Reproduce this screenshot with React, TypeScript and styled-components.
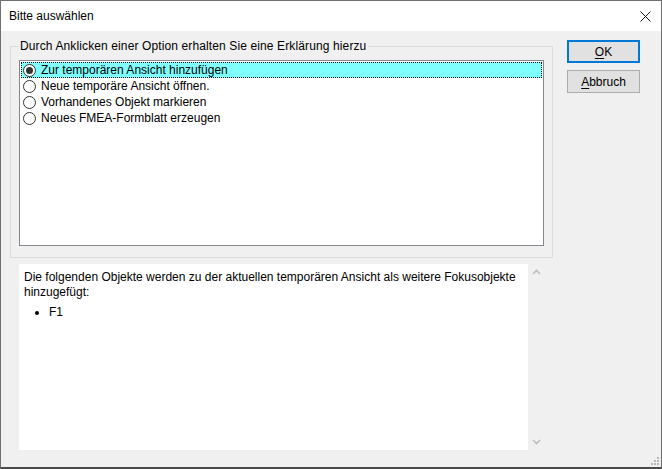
import styled, { createGlobalStyle } from 'styled-components'

const GlobalStyle = createGlobalStyle`
  html, body {
    margin: 0;
    padding: 0;
    background: #3a3a3a;
  }
  * {
    box-sizing: border-box;
  }
`

const Window = styled.div`
  position: relative;
  width: 662px;
  height: 469px;
  border: 1px solid #707070;
  border-bottom: 2px solid #4a4a4a;
  display: flex;
  flex-direction: column;
  font-family: "Liberation Sans", Arial, sans-serif;
  font-size: 12px;
  color: #000;
  background: #f0f0f0;
`

const TitleBar = styled.div`
  height: 30px;
  background: #fff;
  display: flex;
  align-items: center;
  justify-content: space-between;
  padding-left: 8px;
  flex-shrink: 0;
`

const Title = styled.span`
  font-size: 12px;
`

const CloseButton = styled.div`
  width: 46px;
  height: 30px;
  display: flex;
  align-items: center;
  justify-content: center;
  padding-left: 14px;
`

const Body = styled.div`
  flex: 1;
  display: flex;
  padding: 8px 0 0 9px;
`

const LeftColumn = styled.div`
  width: 543px;
  display: flex;
  flex-direction: column;
`

const GroupBox = styled.fieldset`
  margin: 0;
  padding: 0;
  min-width: 0;
  border: 1px solid #dcdcdc;
`

const GroupLabel = styled.legend`
  margin-left: 7px;
  padding: 0 2px;
  line-height: 15px;
  letter-spacing: 0.12px;
`

const ListBox = styled.div`
  margin: 6px 8px 11px 8px;
  height: 186px;
  border: 1px solid #828790;
  background: #fff;
  padding: 1px;
`

const ListItem = styled.div<{ $selected?: boolean }>`
  height: 16px;
  display: flex;
  align-items: center;
  gap: 5px;
  padding-left: 2px;
  white-space: nowrap;
  background: ${p => (p.$selected ? '#80ffff' : 'transparent')};
  outline: ${p => (p.$selected ? '1px dotted #000' : 'none')};
  outline-offset: -1px;
`

const Radio = styled.span<{ $checked?: boolean }>`
  width: 13px;
  height: 13px;
  border-radius: 50%;
  border: 1px solid #333;
  background: #fff;
  display: flex;
  align-items: center;
  justify-content: center;
  flex-shrink: 0;
  &::after {
    content: '';
    width: 7px;
    height: 7px;
    border-radius: 50%;
    background: ${p => (p.$checked ? '#333' : 'transparent')};
  }
`

const InfoRow = styled.div`
  display: flex;
  margin: 6px 0 0 9px;
  height: 186px;
`

const InfoText = styled.div`
  width: 509px;
  background: #fff;
  padding: 6px 5px 0 5px;
  line-height: 15px;
`

const BulletList = styled.ul`
  margin: 5px 0 0 0;
  padding-left: 25px;
  list-style: disc;
`

const ScrollBar = styled.div`
  width: 17px;
  display: flex;
  flex-direction: column;
  justify-content: space-between;
  align-items: center;
  padding: 5px 0 5px 0;
`

const RightColumn = styled.div`
  margin-left: 14px;
  padding-top: 1px;
  display: flex;
  flex-direction: column;
  gap: 7px;
`

const Button = styled.div<{ $default?: boolean }>`
  width: 73px;
  height: 23px;
  display: flex;
  align-items: center;
  justify-content: center;
  background: #e1e1e1;
  border: ${p => (p.$default ? '2px solid #0078d7' : '1px solid #adadad')};
  & u {
    text-decoration-thickness: 1px;
    text-underline-offset: 2px;
  }
`

const Grip = styled.svg`
  position: absolute;
  right: 2px;
  bottom: 2px;
`

const Chevron = ({ up }: { up?: boolean }) => (
  <svg width="9" height="6" viewBox="0 0 9 6">
    <path
      d={up ? 'M1 5 L4.5 1.5 L8 5' : 'M1 1 L4.5 4.5 L8 1'}
      fill="none"
      stroke="#bdbdbd"
      strokeWidth="1.6"
    />
  </svg>
)

const options = [
  'Zur temporären Ansicht hinzufügen',
  'Neue temporäre Ansicht öffnen.',
  'Vorhandenes Objekt markieren',
  'Neues FMEA-Formblatt erzeugen',
]

export default function App() {
  return (
    <>
      <GlobalStyle />
      <Window>
        <TitleBar>
          <Title>Bitte auswählen</Title>
          <CloseButton>
            <svg width="11" height="11" viewBox="0 0 11 11">
              <path d="M0.5 0.5 L10.5 10.5 M10.5 0.5 L0.5 10.5" stroke="#111" strokeWidth="1" />
            </svg>
          </CloseButton>
        </TitleBar>
        <Body>
          <LeftColumn>
            <GroupBox>
              <GroupLabel>Durch Anklicken einer Option erhalten Sie eine Erklärung hierzu</GroupLabel>
              <ListBox>
                {options.map((o, i) => (
                  <ListItem key={o} $selected={i === 0}>
                    <Radio $checked={i === 0} />
                    {o}
                  </ListItem>
                ))}
              </ListBox>
            </GroupBox>
            <InfoRow>
              <InfoText>
                Die folgenden Objekte werden zu der aktuellen temporären Ansicht als weitere Fokusobjekte hinzugefügt:
                <BulletList>
                  <li>F1</li>
                </BulletList>
              </InfoText>
              <ScrollBar>
                <Chevron up />
                <Chevron />
              </ScrollBar>
            </InfoRow>
          </LeftColumn>
          <RightColumn>
            <Button $default>
              <span><u>O</u>K</span>
            </Button>
            <Button>
              <span><u>A</u>bbruch</span>
            </Button>
          </RightColumn>
        </Body>
        <Grip width="8" height="8" viewBox="0 0 8 8">
          <rect x="6" y="0" width="2" height="2" fill="#b8b8b8" />
          <rect x="3" y="3" width="2" height="2" fill="#b8b8b8" />
          <rect x="6" y="3" width="2" height="2" fill="#b8b8b8" />
          <rect x="0" y="6" width="2" height="2" fill="#b8b8b8" />
          <rect x="3" y="6" width="2" height="2" fill="#b8b8b8" />
          <rect x="6" y="6" width="2" height="2" fill="#b8b8b8" />
        </Grip>
      </Window>
    </>
  )
}
